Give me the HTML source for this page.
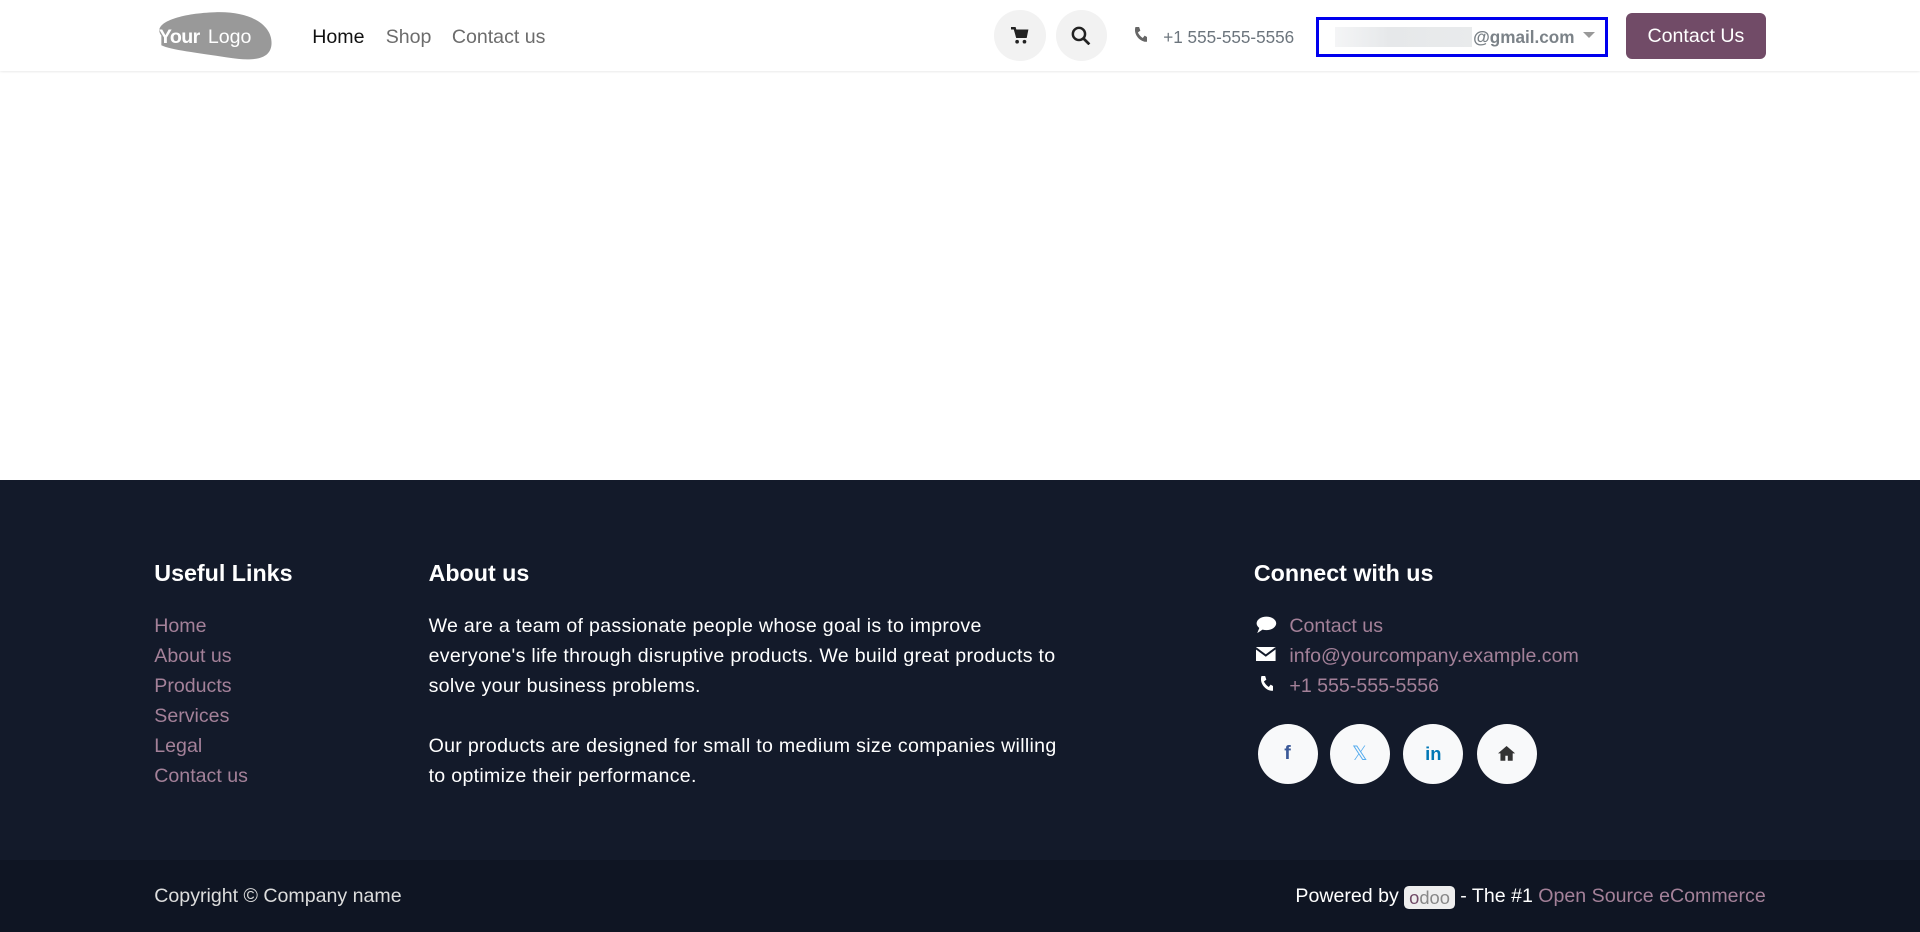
<!DOCTYPE html>
<html><head><meta charset="utf-8"><style>
html,body{margin:0;padding:0}
body{width:1568px;height:761px;overflow:hidden;zoom:1.2245;font-family:"Liberation Sans","DejaVu Sans",sans-serif;font-size:15px;background:#fff;position:relative}
.a{position:absolute;white-space:nowrap}
header{position:absolute;left:0;top:0;width:1568px;height:58px;background:#fff;box-shadow:0 1px 2px rgba(0,0,0,.1)}
.circ{position:absolute;width:42px;height:42px;border-radius:50%;background:#f2f2f2;top:8px}
footer{position:absolute;left:0;top:392px;width:1568px;height:310px;background:#131a2a;color:#fff}
.bot{position:absolute;left:0;top:702px;width:1568px;height:59px;background:#0f1523;color:#fff}
h5{margin:0;font-size:19px;font-weight:bold;position:absolute;top:457px;color:#fff}
.lk{color:#a48199}
.soc{position:absolute;top:591px;width:49px;height:49px;border-radius:50%;background:#f8f9fa;display:flex;align-items:center;justify-content:center}
</style></head><body>
<header>
<svg class="a" style="left:126px;top:9px" width="97" height="41" viewBox="0 0 97 41"><path d="M6 20C-2 10 20 2 50 1C80 0 96 12 96 26C96 38 85 42 60 38C35 34 14 32 6 28Z" fill="#999"/><text x="4" y="26" font-family="Liberation Sans" font-weight="bold" font-size="16" fill="#fff" letter-spacing="-0.5">Your</text><text x="44" y="26" font-family="Liberation Sans" font-size="16" fill="#fff">Logo</text></svg>
<div class="a" style="left:255px;top:21px;font-size:16px;color:#111">Home</div>
<div class="a" style="left:315px;top:21px;font-size:16px;color:#6c6c6c">Shop</div>
<div class="a" style="left:369px;top:21px;font-size:16px;color:#6c6c6c">Contact us</div>
<div class="circ" style="left:812px"><svg style="position:absolute;left:14px;top:14px" width="14" height="14" viewBox="0 0 14 14"><path d="M0 1h3l2 7h7l1-5H4" fill="none" stroke="#222" stroke-width="2"/><rect x="4" y="3" width="9" height="5" fill="#222"/><circle cx="5" cy="12" r="1.5" fill="#222"/><circle cx="11" cy="12" r="1.5" fill="#222"/></svg></div>
<div class="circ" style="left:862px"><svg style="position:absolute;left:13px;top:13px" width="16" height="16" viewBox="0 0 16 16"><circle cx="6.5" cy="6.5" r="5" fill="none" stroke="#222" stroke-width="2"/><path d="M10 10l5 5" stroke="#222" stroke-width="2.2"/></svg></div>
<svg class="a" style="left:925px;top:22px" width="12" height="13" viewBox="0 0 12 13"><path d="M2 0h3l1 3-2 1.5c1 2 2.5 3.5 4 4.5L9.5 7l2.5 1.5V12c-6 1-12-6-10-12z" fill="#666"/></svg>
<div class="a" style="left:950px;top:22px;font-size:14px;color:#6c757d">+1 555-555-5556</div>
<div class="a" style="left:1075px;top:14px;width:233px;height:28px;border:3px solid #0000ee"></div>
<div class="a" style="left:1090px;top:22px;width:112px;height:16px;background:linear-gradient(90deg,#f4f5f6,#e6e8ea 40%,#e9ebec)"></div>
<div class="a" style="left:1203px;top:22px;font-size:14px;font-weight:bold;color:#7b8288">@gmail.com</div>
<div class="a" style="left:1293px;top:26px;width:0;height:0;border-left:5px solid transparent;border-right:5px solid transparent;border-top:5px solid #999"></div>
<div class="a" style="left:1328px;top:11px;width:114px;height:37px;background:#714b67;border-radius:5px;color:#fff;font-size:16px;line-height:39px;text-align:center">Contact Us</div>
</header>
<footer></footer>
<h5 style="left:126px">Useful Links</h5>
<h5 style="left:350px">About us</h5>
<h5 style="left:1024px">Connect with us</h5>
<div class="a lk" style="left:126px;top:499px;font-size:16px;line-height:24.5px">Home<br>About us<br>Products<br>Services<br>Legal<br>Contact us</div>
<div class="a" style="left:350px;top:499px;font-size:16px;line-height:24.5px;color:#fff;letter-spacing:0.25px">We are a team of passionate people whose goal is to improve<br>everyone's life through disruptive products. We build great products to<br>solve your business problems.<br><br>Our products are designed for small to medium size companies willing<br>to optimize their performance.</div>
<svg class="a" style="left:1026px;top:503px" width="17" height="14" viewBox="0 0 17 14"><ellipse cx="8.5" cy="6" rx="8" ry="5.5" fill="#fff"/><path d="M3 9L1 14 7 10z" fill="#fff"/></svg>
<svg class="a" style="left:1026px;top:528px" width="16" height="12" viewBox="0 0 16 12"><rect width="16" height="12" rx="1" fill="#fff"/><path d="M0 1l8 6 8-6" fill="none" stroke="#131a2a" stroke-width="1.6"/></svg>
<svg class="a" style="left:1028px;top:552px" width="12" height="13" viewBox="0 0 12 13"><path d="M2 0h3l1 3-2 1.5c1 2 2.5 3.5 4 4.5L9.5 7l2.5 1.5V12c-6 1-12-6-10-12z" fill="#fff"/></svg>
<div class="a lk" style="left:1053px;top:499px;font-size:16px;line-height:24.5px">Contact us<br>info@yourcompany.example.com<br>+1 555-555-5556</div>
<div class="soc" style="left:1027px"><span style="color:#3b5998;font-weight:bold;font-size:16px">f</span></div>
<div class="soc" style="left:1086px"><span style="color:#55acee;font-size:16px">𝕏</span></div>
<div class="soc" style="left:1146px"><span style="color:#0077b5;font-weight:bold;font-size:15px">in</span></div>
<div class="soc" style="left:1206px"><svg width="14" height="12" viewBox="0 0 14 12"><path d="M7 0L0 6h2v6h4V8h2v4h4V6h2z" fill="#333"/></svg></div>
<div class="bot"></div>
<div class="a" style="left:126px;top:723px;font-size:16px;color:#ddd">Copyright © Company name</div>
<div class="a" style="right:126px;top:723px;font-size:16px;color:#fff">Powered by <span style="display:inline-block;background:#eee;border-radius:4px;padding:0 4px;color:#888;font-size:15px;line-height:19px;vertical-align:middle"><span style="color:#714b67">o</span>doo</span> - The #1 <span class="lk">Open Source eCommerce</span></div>
</body></html>
